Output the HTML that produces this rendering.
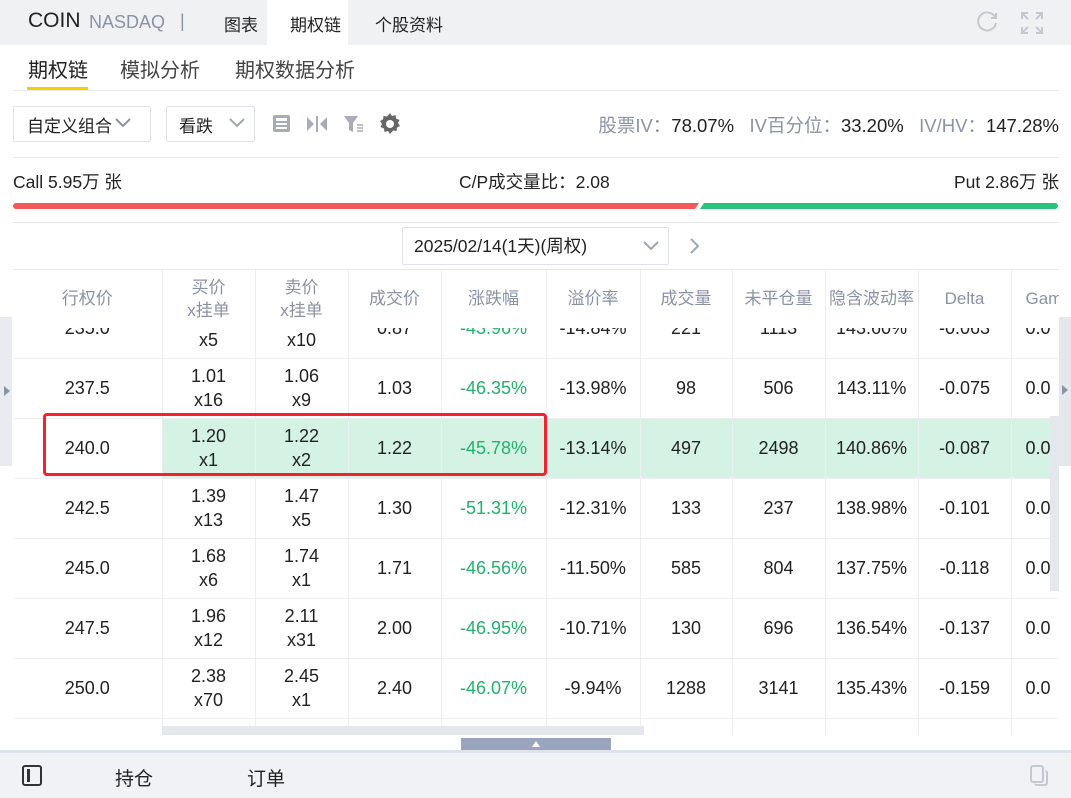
<!DOCTYPE html>
<html><head><meta charset="utf-8"><style>
*{margin:0;padding:0;box-sizing:border-box}
body{width:1071px;height:798px;overflow:hidden;background:#fff;font-family:"Liberation Sans","Noto Sans CJK SC",sans-serif;color:#222;position:relative}
.a{position:absolute}
.top{left:0;top:0;width:1071px;height:45px;background:#f0f1f3}
.g{color:#8a93a6}
table{border-collapse:collapse;table-layout:fixed}
td{text-align:center;font-size:18px;border-right:1px solid #eceef2;border-bottom:1px solid #eceef2;line-height:24px;height:60px;white-space:nowrap;overflow:hidden}
.gr{color:#21b36b}
.hl td.c{background:#d4f3e4}
.hd td{color:#8a93a6;font-size:17px;height:58px;line-height:23px;border-bottom:1px solid #eceef2}
</style></head><body>
<div class="a top"></div>
<div class="a" style="left:28px;top:9px;font-size:21px;color:#222">COIN</div>
<div class="a g" style="left:89px;top:12px;font-size:18px">NASDAQ</div>
<div class="a g" style="left:180px;top:11px;font-size:18px">|</div>
<div class="a" style="left:224px;top:11px;font-size:17px">图表</div>
<div class="a" style="left:267px;top:0;width:81px;height:45px;background:#fff"></div>
<div class="a" style="left:290px;top:11px;font-size:17px">期权链</div>
<div class="a" style="left:375px;top:11px;font-size:17px">个股资料</div>
<svg class="a" style="left:975px;top:10px" width="24" height="24" viewBox="0 0 24 24"><path d="M20 7A9 9 0 1 0 21 13" fill="none" stroke="#c4c8d0" stroke-width="2"/><path d="M21 3v5h-5" fill="none" stroke="#c4c8d0" stroke-width="2"/></svg>
<svg class="a" style="left:1020px;top:11px" width="24" height="24" viewBox="0 0 24 24" fill="none" stroke="#c4c8d0" stroke-width="2"><path d="M2 8V2h6M2 2l6 6M16 2h6v6M22 2l-6 6M2 16v6h6M2 22l6-6M22 16v6h-6M22 22l-6-6"/></svg>

<div class="a" style="left:28px;top:54px;font-size:20px">期权链</div>
<div class="a" style="left:27px;top:87px;width:61px;height:3px;background:#f5d000"></div>
<div class="a" style="left:120px;top:54px;font-size:20px;color:#444">模拟分析</div>
<div class="a" style="left:235px;top:54px;font-size:20px;color:#444">期权数据分析</div>
<div class="a" style="left:13px;top:90px;width:1046px;height:1px;background:#e6e8ec"></div>

<div class="a" style="left:13px;top:106px;width:138px;height:36px;border:1px solid #dfe2e8;border-radius:2px"></div>
<div class="a" style="left:27px;top:112px;font-size:17px">自定义组合</div>
<svg class="a" style="left:114px;top:116px" width="18" height="14"><path d="M2 3l7 7 7-7" fill="none" stroke="#8a93a6" stroke-width="2"/></svg>
<div class="a" style="left:166px;top:106px;width:89px;height:36px;border:1px solid #dfe2e8;border-radius:2px"></div>
<div class="a" style="left:179px;top:112px;font-size:17px">看跌</div>
<svg class="a" style="left:228px;top:116px" width="18" height="14"><path d="M2 3l7 7 7-7" fill="none" stroke="#a0a6b4" stroke-width="2"/></svg>
<svg class="a" style="left:272px;top:114px" width="20" height="20"><rect x="1" y="1" width="17" height="17" rx="2" fill="#a7acb8"/><rect x="4" y="4" width="11" height="3" fill="#fff"/><rect x="4" y="9" width="11" height="2" fill="#fff"/><rect x="4" y="13" width="11" height="2" fill="#fff"/></svg>
<svg class="a" style="left:306px;top:114px" width="22" height="20"><path d="M1 3l7 7-7 7z M21 3l-7 7 7 7z" fill="#a7acb8"/><rect x="10" y="2" width="2" height="16" fill="#a7acb8"/></svg>
<svg class="a" style="left:343px;top:114px" width="22" height="20"><path d="M1 2h14l-5 7v9l-4-2V9z" fill="#a7acb8"/><path d="M14 11h6M14 14h6M14 17h6" stroke="#a7acb8" stroke-width="1.5"/></svg>
<svg class="a" style="left:378px;top:112px" width="24" height="24" viewBox="0 0 24 24"><path d="M12 1l2 3 3.5-1 .5 3.5L21.5 8l-1.5 3 2 3-3 1.5-.5 3.5-3.5-.5L12 22l-2-3-3.5 1-.5-3.5L2.5 15l1.5-3-2-3 3-1.5.5-3.5 3.5.5z" fill="#666"/><circle cx="12" cy="12" r="4" fill="#fff"/></svg>
<div class="a" style="right:12px;top:112px;font-size:18.5px;white-space:nowrap"><span class="g">股票IV：</span>78.07%&nbsp;&nbsp;&nbsp;<span class="g">IV百分位：</span>33.20%&nbsp;&nbsp;&nbsp;<span class="g">IV/HV：</span>147.28%</div>
<div class="a" style="left:13px;top:157px;width:1046px;height:1px;background:#e6e8ec"></div>

<div class="a" style="left:13px;top:169px;font-size:17.5px">Call 5.95万 张</div>
<div class="a" style="left:459px;top:169px;font-size:17.5px">C/P成交量比：2.08</div>
<div class="a" style="right:12px;top:169px;font-size:17.5px">Put 2.86万 张</div>
<div class="a" style="left:13px;top:203px;width:686px;height:6px;background:#f25a5a;border-radius:3px 0 0 3px;clip-path:polygon(0 0,100% 0,calc(100% - 4px) 100%,0 100%)"></div>
<div class="a" style="left:700px;top:203px;width:358px;height:6px;background:#27c47a;border-radius:0 3px 3px 0;clip-path:polygon(4px 0,100% 0,100% 100%,0 100%)"></div>
<div class="a" style="left:13px;top:222px;width:1046px;height:1px;background:#e6e8ec"></div>

<div class="a" style="left:402px;top:227px;width:267px;height:38px;border:1px solid #dfe2e8;border-radius:2px"></div>
<div class="a" style="left:414px;top:233px;font-size:17.5px">2025/02/14(1天)(周权)</div>
<svg class="a" style="left:642px;top:239px" width="18" height="14"><path d="M2 3l7 7 7-7" fill="none" stroke="#a0a6b4" stroke-width="2"/></svg>
<svg class="a" style="left:688px;top:236px" width="14" height="20"><path d="M3 3l7 7-7 7" fill="none" stroke="#a0a6b4" stroke-width="2"/></svg>
<div class="a" style="left:13px;top:269px;width:1046px;height:1px;background:#e6e8ec"></div>

<div class="a" style="left:13px;top:270px;width:1046px;height:58px;overflow:hidden">
<table class="hd" style="width:1091px"><colgroup><col style="width:149px"><col style="width:93px"><col style="width:93px"><col style="width:93px"><col style="width:105px"><col style="width:94px"><col style="width:92px"><col style="width:93px"><col style="width:93px"><col style="width:93px"><col style="width:93px"></colgroup>
<tr><td>行权价</td><td>买价<br>x挂单</td><td>卖价<br>x挂单</td><td>成交价</td><td>涨跌幅</td><td>溢价率</td><td>成交量</td><td>未平仓量</td><td>隐含波动率</td><td>Delta</td><td style="text-align:left;padding-left:14px">Gamma</td></tr></table></div>

<div class="a" style="left:13px;top:328px;width:1046px;height:407px;overflow:hidden">
<table style="width:1091px;margin-top:-30px"><colgroup><col style="width:149px"><col style="width:93px"><col style="width:93px"><col style="width:93px"><col style="width:105px"><col style="width:94px"><col style="width:92px"><col style="width:93px"><col style="width:93px"><col style="width:93px"><col style="width:93px"></colgroup>
<tr><td>235.0</td><td>0.80<br>x5</td><td>0.91<br>x10</td><td>0.87</td><td class="gr">-43.96%</td><td>-14.84%</td><td>221</td><td>1113</td><td>143.60%</td><td>-0.063</td><td style="text-align:left;padding-left:14px">0.0</td></tr>
<tr><td>237.5</td><td>1.01<br>x16</td><td>1.06<br>x9</td><td>1.03</td><td class="gr">-46.35%</td><td>-13.98%</td><td>98</td><td>506</td><td>143.11%</td><td>-0.075</td><td style="text-align:left;padding-left:14px">0.0</td></tr>
<tr class="hl"><td>240.0</td><td class="c">1.20<br>x1</td><td class="c">1.22<br>x2</td><td class="c">1.22</td><td class="c gr">-45.78%</td><td class="c">-13.14%</td><td class="c">497</td><td class="c">2498</td><td class="c">140.86%</td><td class="c">-0.087</td><td class="c" style="text-align:left;padding-left:14px">0.0</td></tr>
<tr><td>242.5</td><td>1.39<br>x13</td><td>1.47<br>x5</td><td>1.30</td><td class="gr">-51.31%</td><td>-12.31%</td><td>133</td><td>237</td><td>138.98%</td><td>-0.101</td><td style="text-align:left;padding-left:14px">0.0</td></tr>
<tr><td>245.0</td><td>1.68<br>x6</td><td>1.74<br>x1</td><td>1.71</td><td class="gr">-46.56%</td><td>-11.50%</td><td>585</td><td>804</td><td>137.75%</td><td>-0.118</td><td style="text-align:left;padding-left:14px">0.0</td></tr>
<tr><td>247.5</td><td>1.96<br>x12</td><td>2.11<br>x31</td><td>2.00</td><td class="gr">-46.95%</td><td>-10.71%</td><td>130</td><td>696</td><td>136.54%</td><td>-0.137</td><td style="text-align:left;padding-left:14px">0.0</td></tr>
<tr><td>250.0</td><td>2.38<br>x70</td><td>2.45<br>x1</td><td>2.40</td><td class="gr">-46.07%</td><td>-9.94%</td><td>1288</td><td>3141</td><td>135.43%</td><td>-0.159</td><td style="text-align:left;padding-left:14px">0.0</td></tr>
<tr><td></td><td></td><td></td><td></td><td></td><td></td><td></td><td></td><td></td><td></td><td></td></tr>
</table></div>
<div class="a" style="left:43px;top:413px;width:504px;height:63px;border:3px solid #f5222d;border-radius:4px"></div>
<div class="a" style="left:1050px;top:416px;width:9px;height:175px;background:#e4e7ec"></div>
<div class="a" style="left:1059px;top:317px;width:12px;height:149px;background:#e4e7ec"></div>
<svg class="a" style="left:1062px;top:385px" width="6" height="10"><path d="M0 0l6 5-6 5z" fill="#8a93a6"/></svg>
<div class="a" style="left:0;top:317px;width:12px;height:149px;background:#e8ebf0"></div>
<svg class="a" style="left:4px;top:386px" width="6" height="10"><path d="M0 0l6 5-6 5z" fill="#8a93a6"/></svg>
<div class="a" style="left:162px;top:726px;width:482px;height:9px;background:#e4e7ec"></div>
<div class="a" style="left:461px;top:738px;width:150px;height:12px;background:#9aa4bd"></div>
<svg class="a" style="left:532px;top:741px" width="8" height="6"><path d="M4 0l4 6H0z" fill="#fff"/></svg>
<div class="a" style="left:0;top:750px;width:1071px;height:48px;background:#f0f2f5;border-top:3px solid #dce3ec"></div>
<div class="a" style="left:22px;top:765px;width:20px;height:21px;border:2px solid #333;border-radius:3px"></div>
<div class="a" style="left:27px;top:769px;width:3px;height:13px;background:#333"></div>
<div class="a" style="left:115px;top:764px;font-size:19px">持仓</div>
<div class="a" style="left:247px;top:764px;font-size:19px">订单</div>
<div class="a" style="left:1030px;top:765px;width:14px;height:18px;border:2px solid #c4c8d0;border-radius:3px"></div>
<div class="a" style="left:1034px;top:770px;width:14px;height:16px;border-right:2px solid #c4c8d0;border-bottom:2px solid #c4c8d0;border-radius:3px"></div>
</body></html>
